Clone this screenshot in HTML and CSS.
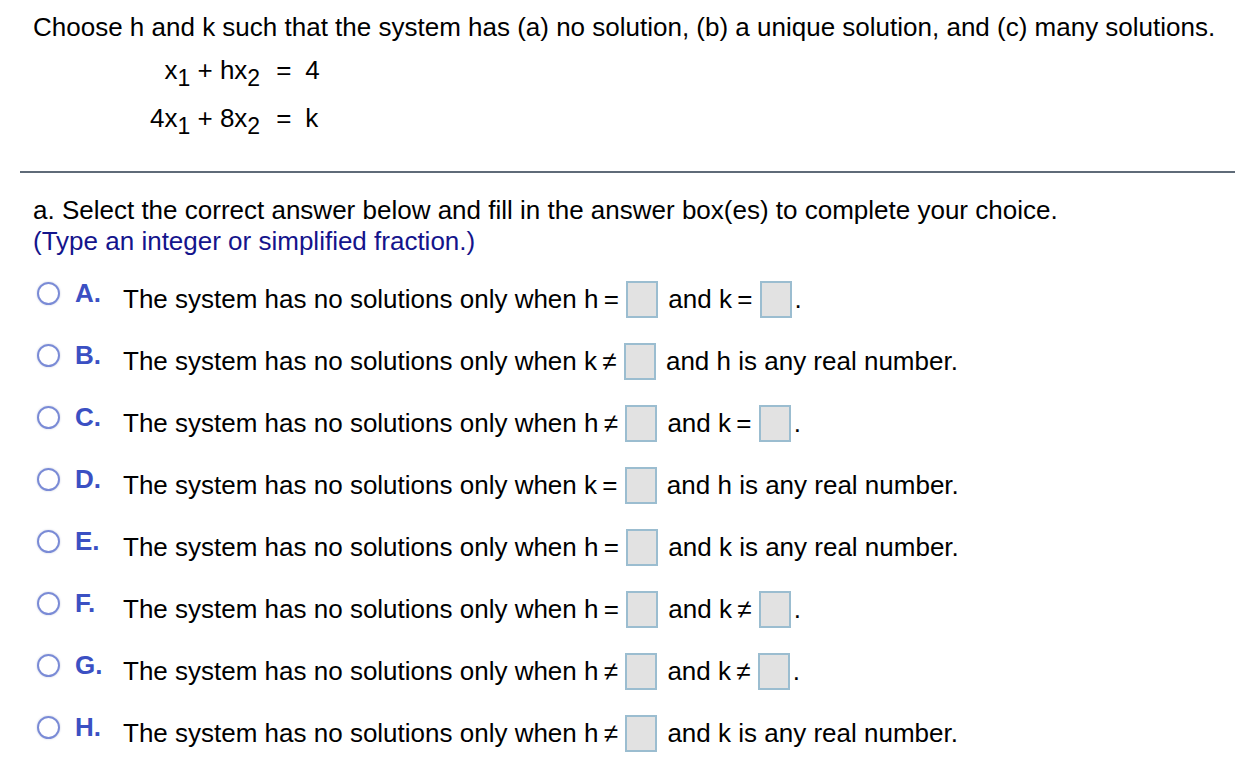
FILE: index.html
```html
<!DOCTYPE html>
<html>
<head>
<meta charset="utf-8">
<link rel="stylesheet" href="styles.css">
</head>
<body>
<div class="page">
  <p class="question">Choose h and k such that the system has (a) no solution, (b) a unique solution, and (c) many solutions.</p>
  <table class="system">
    <tr><td class="lhs">x<sub>1</sub> + hx<sub>2</sub></td><td class="eq">=</td><td class="rhs">4</td></tr>
    <tr><td class="lhs">4x<sub>1</sub> + 8x<sub>2</sub></td><td class="eq">=</td><td class="rhs">k</td></tr>
  </table>
</div>
<hr class="rule">
<div class="page part">
  <p class="instr">a. Select the correct answer below and fill in the answer box(es) to complete your choice.</p>
  <p class="hint">(Type an integer or simplified fraction.)</p>
  <ul class="choices">
    <li class="choice"><span class="radio"></span><span class="letter">A.</span><span class="text">The system has no solutions only when h&#8201;= <span class="box"></span> and k&#8201;= <span class="box"></span>.</span></li>
    <li class="choice"><span class="radio"></span><span class="letter">B.</span><span class="text">The system has no solutions only when k&#8201;≠ <span class="box"></span> and h is any real number.</span></li>
    <li class="choice"><span class="radio"></span><span class="letter">C.</span><span class="text">The system has no solutions only when h&#8201;≠ <span class="box"></span> and k&#8201;= <span class="box"></span>.</span></li>
    <li class="choice"><span class="radio"></span><span class="letter">D.</span><span class="text">The system has no solutions only when k&#8201;= <span class="box"></span> and h is any real number.</span></li>
    <li class="choice"><span class="radio"></span><span class="letter">E.</span><span class="text">The system has no solutions only when h&#8201;= <span class="box"></span> and k is any real number.</span></li>
    <li class="choice"><span class="radio"></span><span class="letter">F.</span><span class="text">The system has no solutions only when h&#8201;= <span class="box"></span> and k&#8201;≠ <span class="box"></span>.</span></li>
    <li class="choice"><span class="radio"></span><span class="letter">G.</span><span class="text">The system has no solutions only when h&#8201;≠ <span class="box"></span> and k&#8201;≠ <span class="box"></span>.</span></li>
    <li class="choice"><span class="radio"></span><span class="letter">H.</span><span class="text">The system has no solutions only when h&#8201;≠ <span class="box"></span> and k is any real number.</span></li>
  </ul>
</div>
</body>
</html>
```
FILE: styles.css
```css
html, body {
  margin: 0;
  padding: 0;
  background: #ffffff;
}
body {
  font-family: "Liberation Sans", Arial, sans-serif;
  font-size: 26px;
  color: #000000;
}
.page {
  padding-left: 33px;
  padding-right: 0;
}
.question {
  margin: 0;
  padding-top: 12px;
  line-height: 30px;
  white-space: nowrap;
}
.system {
  border-collapse: collapse;
  margin-left: 117px;
  margin-top: 4px;
}
.system td {
  padding: 0;
  height: 48px;
  line-height: 48px;
  vertical-align: middle;
}
.system .lhs {
  text-align: right;
}
.system .eq {
  padding-left: 16px;
  padding-right: 14px;
}
.system sub {
  font-size: 23px;
  vertical-align: -7px;
  line-height: 0;
}
.rule {
  margin: 29px 0 0 20px;
  border: 0;
  height: 2px;
  background: #5f6b78;
}
.part {
  padding-top: 21px;
}
.instr {
  margin: 0;
  line-height: 32px;
  white-space: nowrap;
}
.hint {
  margin: 0;
  line-height: 30px;
  color: #14148c;
}
.choices {
  list-style: none;
  margin: 12px 0 0 0;
  padding: 0;
}
.choice {
  display: flex;
  align-items: center;
  height: 62px;
}
.radio {
  flex: none;
  box-sizing: border-box;
  width: 23px;
  height: 23px;
  border: 2px solid #7a8bd6;
  border-radius: 50%;
  box-shadow: 0 0 2px rgba(120, 130, 170, 0.45);
  margin-left: 4px;
  margin-right: 15px;
  margin-top: -12px;
}
.letter {
  flex: none;
  width: 48px;
  font-size: 26px;
  font-weight: bold;
  color: #3b50c3;
  margin-top: -12px;
}
.text {
  white-space: nowrap;
  line-height: 38px;
}
.box {
  display: inline-block;
  box-sizing: border-box;
  width: 32px;
  height: 37px;
  background: #e2e2e2;
  border: 2px solid #9bbdd0;
  vertical-align: middle;
  margin-top: -4px;
  margin-right: 3px;
}
```
